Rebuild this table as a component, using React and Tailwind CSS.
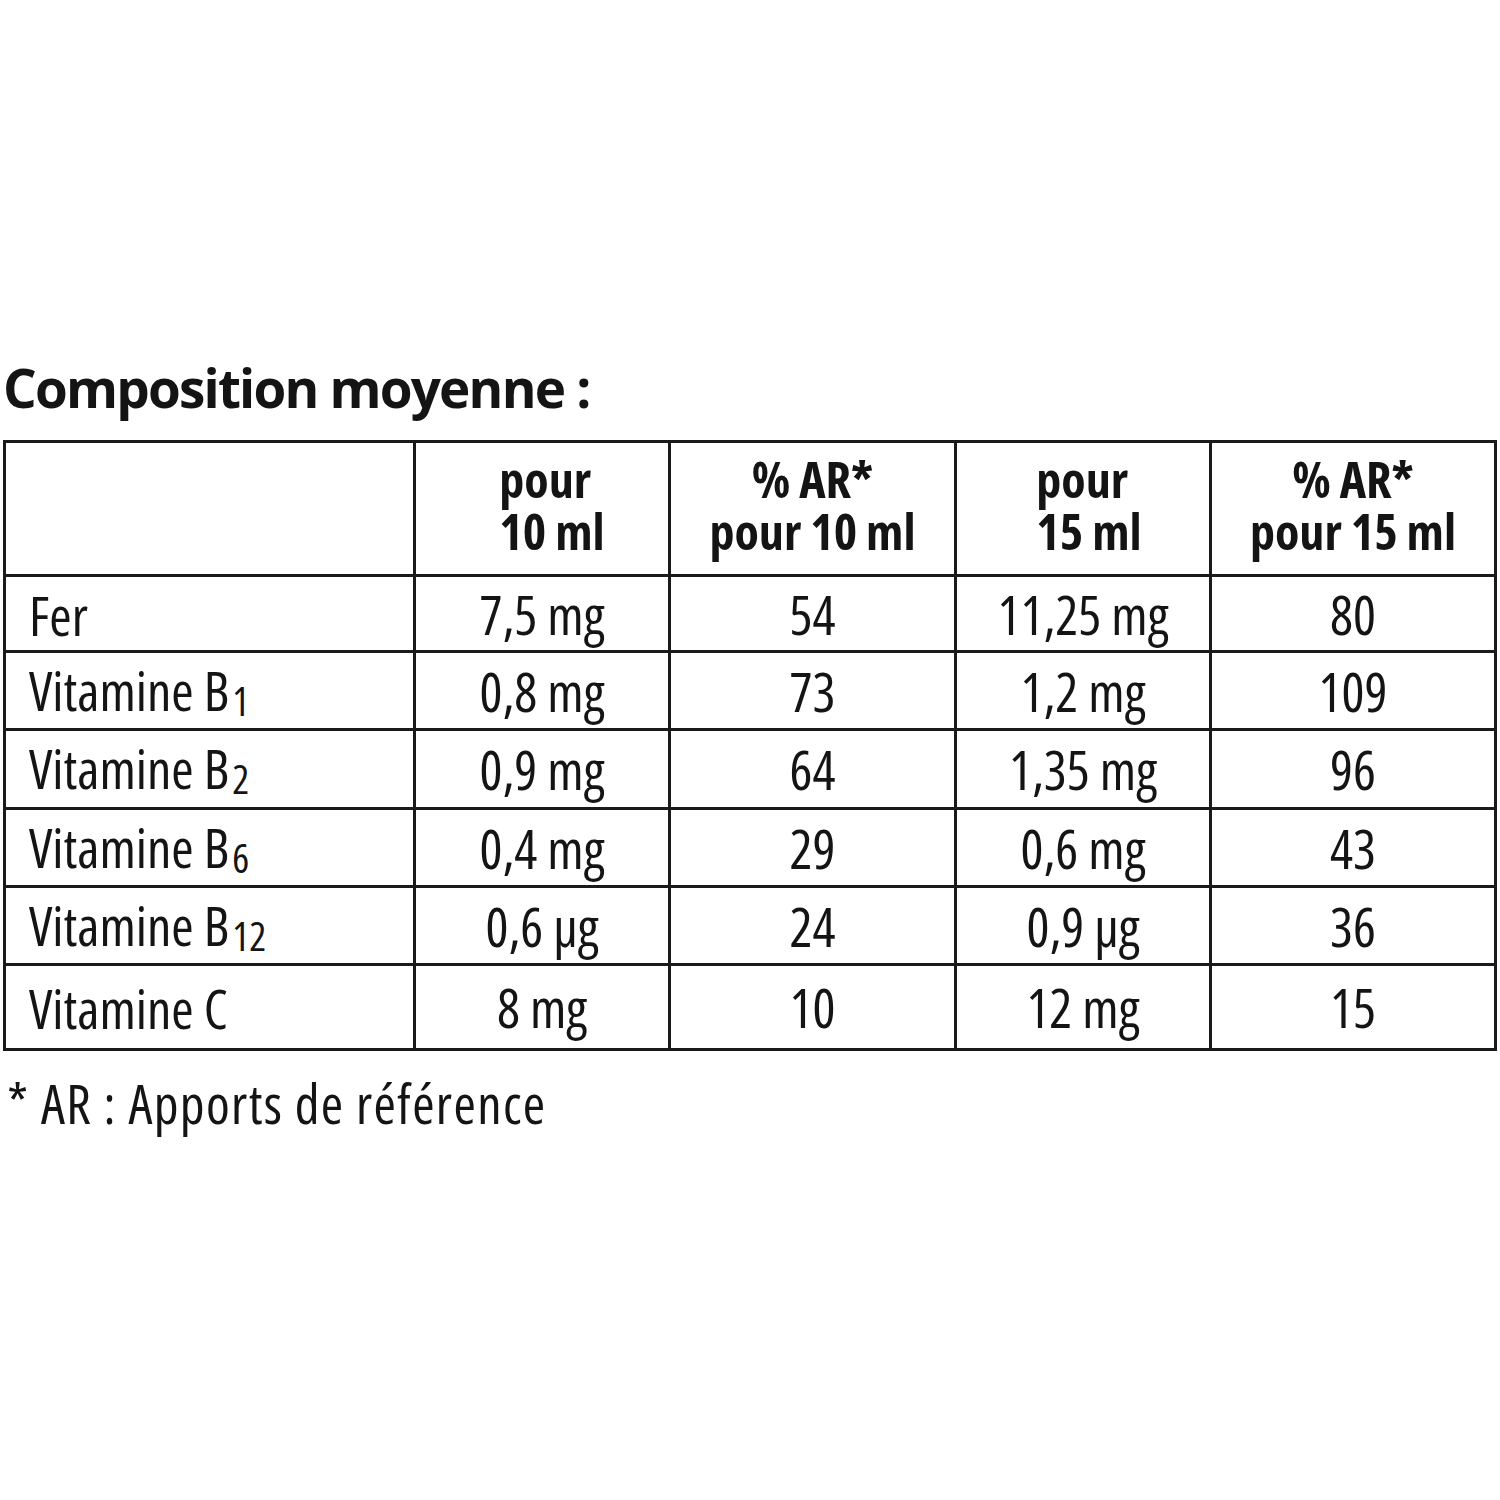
import React from "react";

const rows = [
  { name: "Fer", sub: null, a: "7,5 mg", b: "54", c: "11,25 mg", d: "80", h: "h-[76px]" },
  { name: "Vitamine B", sub: "1", a: "0,8 mg", b: "73", c: "1,2 mg", d: "109", h: "h-[78px]" },
  { name: "Vitamine B", sub: "2", a: "0,9 mg", b: "64", c: "1,35 mg", d: "96", h: "h-[79px]" },
  { name: "Vitamine B", sub: "6", a: "0,4 mg", b: "29", c: "0,6 mg", d: "43", h: "h-[78px]" },
  { name: "Vitamine B", sub: "12", a: "0,6 µg", b: "24", c: "0,9 µg", d: "36", h: "h-[78px]" },
  { name: "Vitamine C", sub: null, a: "8 mg", b: "10", c: "12 mg", d: "15", h: "h-[82px]" },
];

function Head({ top, bottom, left }) {
  return (
    <div className={`flex flex-col pb-[8px] ${left ? "items-start" : "items-center"}`}>
      <div className="h-[52px] leading-[52px] whitespace-nowrap">{top}</div>
      <div className="h-[52px] leading-[52px] whitespace-nowrap">{bottom}</div>
    </div>
  );
}

export default function App() {
  return (
    <div className="w-[1500px] h-[1500px] bg-white text-[#141414] font-['Open_Sans','DejaVu_Sans',sans-serif] pt-[361px] pl-[3px]">
      <h1 className="text-[53px] leading-none h-[53px] font-bold tracking-[-1.8px] font-stretch-[90%]">
        Composition moyenne :
      </h1>
      <div className="mt-[26px] w-[1494px] border-[3px] border-[#1a1a1a] font-stretch-[75%] text-[54px] leading-none">
        <div className="flex h-[134px] border-b-[3px] border-[#1a1a1a] font-bold text-[50px]">
          <div className="w-[410px] border-r-[3px] border-[#1a1a1a]" />
          <div className="w-[255px] border-r-[3px] border-[#1a1a1a] flex items-center justify-center pl-[20px]">
            <Head top="pour" bottom="10 ml" left />
          </div>
          <div className="w-[286px] border-r-[3px] border-[#1a1a1a] flex items-center justify-center">
            <Head top="% AR*" bottom="pour 10 ml" />
          </div>
          <div className="w-[255px] border-r-[3px] border-[#1a1a1a] flex items-center justify-center pl-[12px]">
            <Head top="pour" bottom="15 ml" left />
          </div>
          <div className="flex-1 flex items-center justify-center">
            <Head top="% AR*" bottom="pour 15 ml" />
          </div>
        </div>
        {rows.map((r, i) => (
          <div
            key={i}
            className={`flex ${r.h} ${i < rows.length - 1 ? "border-b-[3px] border-[#1a1a1a]" : ""}`}
          >
            <div className="w-[410px] border-r-[3px] border-[#1a1a1a] flex items-center pl-[23px] pt-[2px]">
              <span>
                {r.name}
                {r.sub && <span className="text-[40px] align-[-5px] ml-[3px]">{r.sub}</span>}
              </span>
            </div>
            <div className="w-[255px] border-r-[3px] border-[#1a1a1a] flex items-center justify-center">
              {r.a}
            </div>
            <div className="w-[286px] border-r-[3px] border-[#1a1a1a] flex items-center justify-center">
              {r.b}
            </div>
            <div className="w-[255px] border-r-[3px] border-[#1a1a1a] flex items-center justify-center">
              {r.c}
            </div>
            <div className="flex-1 flex items-center justify-center">{r.d}</div>
          </div>
        ))}
      </div>
      <p className="mt-[25px] text-[54px] leading-none font-stretch-[75%] tracking-[1.4px] pl-[4px] whitespace-pre">
        {"* AR : Apports de référence"}
      </p>
    </div>
  );
}
